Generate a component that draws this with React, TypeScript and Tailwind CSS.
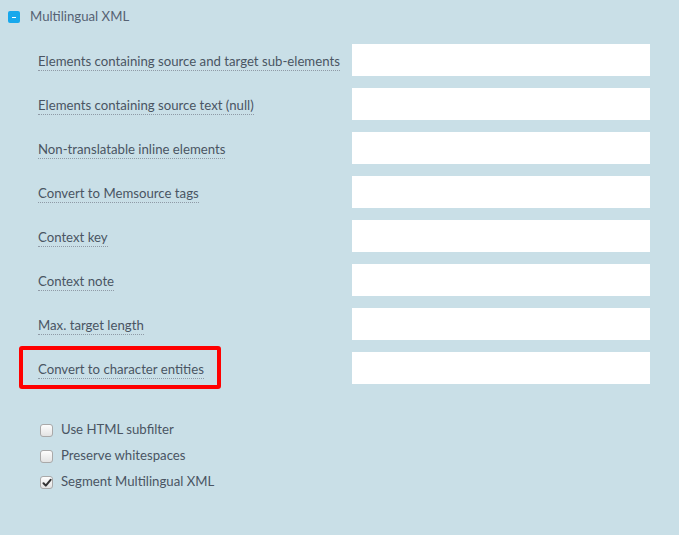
import React from "react";

const rows = [
  "Elements containing source and target sub-elements",
  "Elements containing source text (null)",
  "Non-translatable inline elements",
  "Convert to Memsource tags",
  "Context key",
  "Context note",
  "Max. target length",
  "Convert to character entities",
];

const checks = [
  { label: "Use HTML subfilter", checked: false },
  { label: "Preserve whitespaces", checked: false },
  { label: "Segment Multilingual XML", checked: true },
];

function Box({ checked }: { checked: boolean }) {
  return (
    <span className="relative inline-flex w-[13px] h-[13px] rounded-[3px] border border-[#a9a9a9] bg-gradient-to-b from-[#fdfdfd] to-[#e3e3e3] items-center justify-center">
      {checked && (
        <svg width="10" height="10" viewBox="0 0 10 10" className="absolute left-[1px] top-[1px]">
          <path d="M1.5 5.2 L3.8 7.6 L8.6 1.8" fill="none" stroke="#333" strokeWidth="2" strokeLinecap="round" strokeLinejoin="round" />
        </svg>
      )}
    </span>
  );
}

export default function App() {
  return (
    <div
      className="w-[679px] h-[535px] bg-[#c9dfe7] text-[#4a5563] text-[13.2px] overflow-hidden"
      style={{ fontFamily: "Lato, 'Open Sans', sans-serif" }}
    >
      <div className="flex items-center pl-[8px] pt-[10px] h-[23px] gap-[10px]">
        <span className="w-[12px] h-[12px] rounded-[2px] bg-[#17a8ec] flex items-center justify-center">
          <span className="w-[4px] h-[1px] bg-white mt-[2px]" />
        </span>
        <span className="text-[#566273]">Multilingual XML</span>
      </div>
      <div className="flex flex-col pt-[21px] pl-[38px] gap-[12px]">
        {rows.map((r, i) => (
          <div key={r} className="relative flex items-center h-[32px]">
            <div className="w-[314px] flex items-center">
              <span className="inline-block whitespace-nowrap border-b border-dotted border-[#8f9aa6] leading-[17px] pt-[3px]">
                {r}
              </span>
            </div>
            <div className="w-[298px] h-[32px] bg-white" />
            {i === rows.length - 1 && (
              <div className="absolute left-[-19px] top-[-6px] w-[202px] h-[43px] border-[4px] border-[#ff0000] rounded-[3px]" />
            )}
          </div>
        ))}
      </div>
      <div className="flex flex-col pl-[40px] pt-[37px] gap-[8px]">
        {checks.map((c) => (
          <div key={c.label} className="flex items-center gap-[8px] h-[18px]">
            <Box checked={c.checked} />
            <span>{c.label}</span>
          </div>
        ))}
      </div>
    </div>
  );
}
